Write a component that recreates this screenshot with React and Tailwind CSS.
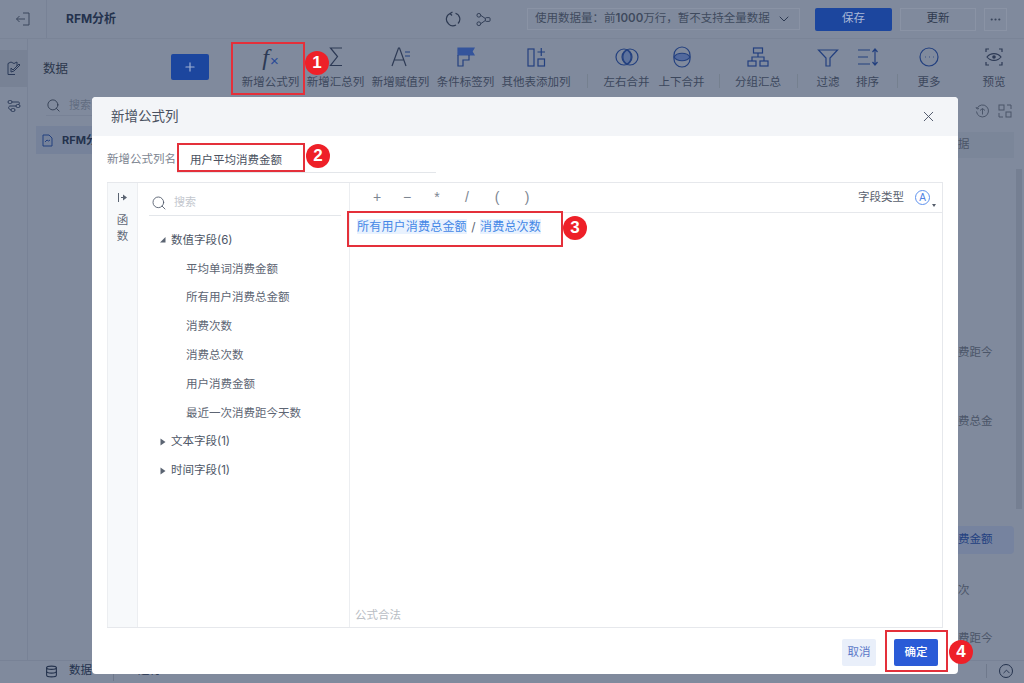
import { X, ChevronDown, Plus, Search, ChevronUp, Database, MoreHorizontal } from "lucide-react"

const ink = "#23407f"

const Icon = ({ children, size = 24 }) => (
  <svg width={size} height={size} viewBox="0 0 24 24" fill="none" stroke={ink} strokeWidth="1.2">
    {children}
  </svg>
)

const tools = [
  {
    label: "新增公式列",
    width: "w-[65px]",
    icon: (
      <div className="h-[24px] flex items-center font-['Liberation_Serif',serif] italic text-[24px] leading-none text-[#2d3a55]">
        f<span className="not-italic font-['Liberation_Sans',sans-serif] text-[15px] mt-[7px] ml-[1px] text-[#2a4b97]">×</span>
      </div>
    ),
  },
  {
    label: "新增汇总列",
    width: "w-[65px]",
    icon: <Icon><path d="M18 3H6.500l7 8.500-7 9H18" stroke="#2d3a55" /></Icon>,
  },
  {
    label: "新增赋值列",
    width: "w-[65px]",
    icon: <Icon><path d="M3 21 9.500 3h1L17 21M5.500 15h9.500" stroke="#2d3a55" /><path d="M16 7h5M16 11h5" strokeWidth="1" /></Icon>,
  },
  {
    label: "条件标签列",
    width: "w-[65px]",
    icon: (
      <Icon>
        <path d="M4 3h16l-2 3.500 2 3.500H4z" fill="#34549c" stroke="#34549c" />
        <path d="M4 10v11h5v-6h6v-5" />
      </Icon>
    ),
  },
  {
    label: "其他表添加列",
    width: "w-[76px]",
    icon: (
      <Icon>
        <rect x="4" y="4" width="6" height="17" />
        <rect x="14" y="14" width="6.500" height="7" />
        <path d="M17.250 3v8M13.500 7h7.500" />
      </Icon>
    ),
  },
  { sep: "ml-[13px] mr-[11px]" },
  {
    label: "左右合并",
    width: "w-[55px]",
    icon: (
      <Icon>
        <circle cx="9" cy="12" r="8" />
        <circle cx="15" cy="12" r="8" />
        <path d="M12 5a8 8 0 0 1 0 14 8 8 0 0 1 0-14z" fill="#34549c" fillOpacity="0.45" />
      </Icon>
    ),
  },
  {
    label: "上下合并",
    width: "w-[55px]",
    icon: (
      <Icon>
        <rect x="4" y="2" width="16" height="20" rx="8" />
        <path d="M4 12c3-5 13-5 16 0-3 5-13 5-16 0z" fill="#34549c" fillOpacity="0.6" />
      </Icon>
    ),
  },
  { sep: "ml-[10px] mr-[8px]" },
  {
    label: "分组汇总",
    width: "w-[60px]",
    icon: (
      <Icon>
        <rect x="7.500" y="3" width="9" height="5" />
        <rect x="2" y="16" width="8" height="5" />
        <rect x="14" y="16" width="8" height="5" />
        <path d="M12 8v4M6 16v-4h12v4" />
      </Icon>
    ),
  },
  { sep: "ml-[9px] mr-[10px]" },
  {
    label: "过滤",
    width: "w-[40px]",
    icon: <Icon><path d="M2.500 5h19l-7.500 8v8h-4v-8z" /></Icon>,
  },
  {
    label: "排序",
    width: "w-[39px]",
    icon: (
      <Icon>
        <path d="M2 5h12M2 12h10M2 19h12" />
        <path d="M19 4v16M16.500 7 19 4l2.500 3M16.500 17l2.500 3 2.500-3" />
      </Icon>
    ),
  },
  { sep: "ml-[10px] mr-[6px]" },
  {
    label: "更多",
    width: "w-[50px]",
    icon: (
      <Icon>
        <circle cx="12" cy="12" r="9" />
        <path d="M8 12h.5M12 12h.5M16 12h.5" strokeWidth="1.6" />
      </Icon>
    ),
  },
  {
    label: "预览",
    width: "w-[50px] ml-[15px]",
    icon: (
      <Icon>
        <path d="M4 7V4h3M17 4h3v3M4 17v3h3M17 20h3v-3" stroke="#2d3a55" />
        <path d="M5 12c3.500-4.500 10.500-4.500 14 0-3.500 4.500-10.500 4.500-14 0z" stroke="#2d3a55" />
        <circle cx="12" cy="12" r="1.800" fill="#2d3a55" stroke="none" />
      </Icon>
    ),
  },
]

const fields = ["平均单词消费金额", "所有用户消费总金额", "消费次数", "消费总次数", "用户消费金额", "最近一次消费距今天数"]

const Tool = ({ tool }) => {
  if (tool.sep) return <div className={`w-px h-[14px] mt-[35px] bg-[#75808f] ${tool.sep}`}></div>
  return (
    <div className={`${tool.width} shrink-0 flex flex-col items-center pt-[6px]`}>
      <div className="h-[24px] flex items-center justify-center">{tool.icon}</div>
      <span className="mt-[5px] text-[11.5px] leading-[16px] whitespace-nowrap text-[#3c475c]">{tool.label}</span>
    </div>
  )
}

const Marker = ({ n, box, dot }) => (
  <>
    <div className={`absolute border-2 border-[#e4303a] ${box}`}></div>
    <div className={`absolute w-[24px] h-[24px] rounded-full bg-[#ee2028] text-white flex items-center justify-center font-['Liberation_Sans',sans-serif] font-bold text-[17px] ${dot}`}>
      {n}
    </div>
  </>
)

const Caret = ({ open }) => (
  <svg width="8" height="8" viewBox="0 0 8 8" className="shrink-0" fill="#5b6472">
    {open ? <path d="M1 6.500h5.500V1z" /> : <path d="M1.500 0.500 6.500 4l-5 3.500z" />}
  </svg>
)

const Group = ({ label, open }) => (
  <div className="h-[28.8px] flex items-center gap-[4px] pl-[21px] text-[11.5px] text-[#4d5666]">
    <Caret open={open} />
    {label}
  </div>
)

export default function App() {
  return (
    <div className="relative w-[1024px] h-[683px] overflow-hidden bg-[#808a9d] font-['Inter','Noto_Sans_CJK_SC',sans-serif]">
      {/* top bar */}
      <div className="h-[39px] flex items-center border-b border-[#7a8497]">
        <div className="w-[47px] h-full flex items-center justify-center border-r border-[#788296]">
          <svg width="16" height="16" viewBox="0 0 16 16" fill="none" stroke="#3a465c" strokeWidth="1">
            <path d="M8 2h6v12H8M10 8H1.500M4.500 5 1.500 8l3 3" />
          </svg>
        </div>
        <span className="ml-[19px] text-[12px] font-bold text-[#24324d]">RFM分析</span>
        <svg className="ml-[329px]" width="16" height="16" viewBox="0 0 16 16" fill="none" stroke="#2d3a52" strokeWidth="1.2">
          <path d="M10.500 2.200A6.200 6.200 0 0 1 13 12.500M11 14a6.200 6.200 0 0 1-7.500-1.200A6.200 6.200 0 0 1 5 2.500" />
          <path d="M5 2.500 7.500 1M5 2.500 7 4.500" />
        </svg>
        <svg className="ml-[15px]" width="15" height="15" viewBox="0 0 16 16" fill="none" stroke="#2d3a52" strokeWidth="1">
          <circle cx="3" cy="3.500" r="2" />
          <circle cx="3" cy="12.500" r="2" />
          <rect x="10" y="6" width="5" height="4" rx="1" />
          <path d="M5 3.500 10 7M5 12.500 10 9" />
        </svg>
        <div className="ml-[36px] w-[273px] h-[22px] border border-[#8a93a5] flex items-center pl-[7px] text-[11.5px] text-[#3f4a5e] whitespace-nowrap">
          使用数据量：前<b className="font-semibold">1000</b>万行，暂不支持全量数据
          <ChevronDown size={16} strokeWidth={1.5} className="ml-[6px] text-[#2d3a52]" />
        </div>
        <div className="ml-[15px] w-[77px] h-[23px] rounded-[2px] bg-[#1c469e] flex items-center justify-center text-[11.5px] text-[#a9b8d6]">保存</div>
        <div className="ml-[8px] w-[76px] h-[23px] border border-[#8a93a5] flex items-center justify-center text-[11.5px] text-[#2f3a4f]">更新</div>
        <div className="ml-[8px] w-[23px] h-[23px] border border-[#8a93a5] flex items-center justify-center text-[#3a465c]">
          <MoreHorizontal size={13} />
        </div>
      </div>

      {/* body */}
      <div className="flex h-[621px]">
        <div className="w-[28px] shrink-0 border-r border-[#788296] pt-[11px]">
          <div className="h-[37px] bg-[#788295] flex items-center justify-center">
            <svg width="15" height="15" viewBox="0 0 15 15" fill="none" stroke="#2b3a58" strokeWidth="1">
              <path d="M2 2.500 5 1l3 1.500L11 1v4M2 2.500v11h7M5 7l2 2 6-6 1 1-6 6-3 1z" />
            </svg>
          </div>
          <div className="h-[37px] flex items-center justify-center">
            <svg width="14" height="14" viewBox="0 0 14 14" fill="none" stroke="#2b3a58" strokeWidth="1">
              <rect x="1" y="1.500" width="4" height="3" rx="1.500" />
              <rect x="9" y="5.500" width="4" height="3" rx="1.500" />
              <rect x="4" y="9.500" width="4" height="3" rx="1.500" />
              <path d="M5 3h6c2 0 2 2 0 2.500M9 7H3c-2 .5-2 3 1 4" />
            </svg>
          </div>
        </div>

        <div className="w-[210px] shrink-0 pl-[8px]">
          <div className="flex items-center h-[58px] pl-[7px] pt-[2px]">
            <span className="text-[12.5px] text-[#2c374c]">数据</span>
            <div className="ml-[103px] -mt-[4px] w-[38px] h-[26px] rounded-[2px] bg-[#1c469e] flex items-center justify-center">
              <Plus size={14} className="text-[#9fb0d2]" />
            </div>
          </div>
          <div className="ml-[10px] w-[60px] h-[20px] -mt-[1px] border-b border-[#788296] flex items-center gap-[8px] text-[11px] text-[#626d81] whitespace-nowrap overflow-hidden">
            <Search size={15} strokeWidth={1.4} className="shrink-0 text-[#2f3a4f]" />
            搜索
          </div>
          <div className="mt-[10px] h-[28px] bg-[#76829a] flex items-center pl-[5px] gap-[8px]">
            <svg width="13" height="13" viewBox="0 0 13 13" fill="none" stroke="#23407f" strokeWidth="1">
              <path d="M2 1h6l3 3v8H2zM4 8l2-2 1.500 1L9 6" />
            </svg>
            <span className="text-[11px] font-bold text-[#24324d] whitespace-nowrap">RFM分析</span>
          </div>
        </div>

        <div className="flex-1 min-w-0 relative">
          <div className="flex h-[58px]">
            {tools.map((tool, i) => (
              <Tool key={i} tool={tool} />
            ))}
          </div>
          {/* right panel, mostly hidden by the dialog */}
          <div className="absolute right-0 top-[58px] bottom-0 w-[66px] overflow-hidden">
            <div className="flex justify-end gap-[8px] pr-[12px] pt-[7px] text-[#3a465c]">
              <svg width="15" height="15" viewBox="0 0 15 15" fill="none" stroke="#4a5569" strokeWidth="1">
                <path d="M2 4.500A6 6 0 1 1 1.500 7.500M1 3l1 2 2-.5" />
                <path d="M7.500 10.500v-6M5 6.500l2.500-2 2.500 2" />
              </svg>
              <svg width="14" height="14" viewBox="0 0 14 14" fill="none" stroke="#4a5569" strokeWidth="1">
                <rect x="1" y="1" width="5" height="5" />
                <rect x="8" y="8" width="5" height="5" />
                <path d="M9 1h4v4M5 13H1V9" />
              </svg>
            </div>
            <div className="mt-[13px] h-[26px] mr-[10px] bg-[#7b8699] flex items-center text-[11.5px] text-[#4b5568]">据</div>
            <div className="mt-[182px] h-[26px] mr-[10px] flex items-center text-[11.5px] text-[#4b5568]">费距今</div>
            <div className="mt-[43px] h-[26px] mr-[10px] flex items-center text-[11.5px] text-[#4b5568]">费总金</div>
            <div className="mt-[91px] h-[28px] mr-[10px] rounded-r-[4px] bg-[#76839f] flex items-center text-[11.5px] text-[#23407f]">费金额</div>
            <div className="mt-[24px] h-[26px] mr-[10px] flex items-center text-[11.5px] text-[#4b5568]">次</div>
            <div className="mt-[22px] h-[26px] mr-[10px] flex items-center text-[11.5px] text-[#4b5568]">费距今</div>
          </div>
          <div className="absolute right-[2px] top-[130px] w-[6px] h-[340px] bg-[#757f92]"></div>
        </div>
      </div>

      {/* bottom bar */}
      <div className="h-[23px] flex items-center border-t border-[#788296] pb-[2px]">
        <Database size={13} className="ml-[45px] text-[#24324d]" />
        <span className="ml-[11px] text-[11.5px] text-[#24324d] w-[44px]">数据</span>
        <div className="w-px h-full bg-[#6f798c]"></div>
        <span className="ml-[24px] text-[11.5px] text-[#24324d]">运行</span>
        <div className="ml-auto w-px h-[14px] bg-[#6f798c]"></div>
        <div className="ml-[12px] mr-[11px] w-[14px] h-[14px] rounded-full border border-[#24324d] flex items-center justify-center">
          <ChevronUp size={11} className="text-[#24324d]" />
        </div>
      </div>

      {/* dialog */}
      <div className="absolute left-[92px] top-[97px] w-[866px] h-[577px] bg-white rounded-[4px] flex flex-col overflow-hidden">
        <div className="h-[39px] shrink-0 bg-[#f3f5f8] flex items-center justify-between pl-[19px] pr-[21px]">
          <span className="text-[13.5px] text-[#4a5160]">新增公式列</span>
          <X size={17} strokeWidth={1.3} className="text-[#475063]" />
        </div>

        <div className="h-[46px] shrink-0 flex items-center pl-[15px] pt-[1px]">
          <span className="w-[70px] text-[11.5px] text-[#7d8591] whitespace-nowrap">新增公式列名</span>
          <div className="w-[259px] h-[24px] mt-[2px] pl-[13px] border-b border-[#e3e6ea] text-[11.5px] leading-[22px] text-[#4a5160]">用户平均消费金额</div>
        </div>

        <div className="mx-[15px] h-[446px] shrink-0 flex border-y border-[#e6e8ec]">
          <div className="w-[31px] shrink-0 bg-[#f7f9fb] border-x border-[#eceef1] flex flex-col items-center pt-[8px] text-[11.5px] leading-[16px] text-[#626a78]">
            <svg width="11" height="11" viewBox="0 0 11 11" fill="#5b6472" className="mb-[9px] mt-[1px]">
              <path d="M1 1h1v9H1zM4 5h2V2.500L10 5.500 6 8.500V6H4z" />
            </svg>
            <span>函</span>
            <span>数</span>
          </div>

          <div className="w-[212px] shrink-0 border-r border-[#eceef1] flex flex-col">
            <div className="ml-[11px] mr-[8px] h-[33px] border-b border-[#e3e6ea] flex items-center gap-[7px] pl-[2px] pt-[7px] text-[11px] text-[#c3c7ce]">
              <Search size={16} strokeWidth={1.3} className="text-[#50596a]" />
              搜索
            </div>
            <div className="mt-[10px]">
              <Group label="数值字段(6)" open />
              {fields.map((f) => (
                <div key={f} className="h-[28.8px] pl-[48px] flex items-center text-[11.5px] text-[#5d6573]">{f}</div>
              ))}
              <Group label="文本字段(1)" />
              <Group label="时间字段(1)" />
            </div>
          </div>

          <div className="flex-1 min-w-0 border-r border-[#e6e8ec] flex flex-col">
            <div className="h-[30px] shrink-0 border-b border-[#e6e8ec] flex items-center pl-[12px] pr-[5px] text-[14px] text-[#7d8591]">
              {["+", "−", "*", "/", "(", ")"].map((op) => (
                <span key={op} className="w-[30px] text-center font-['Liberation_Sans',sans-serif]">{op}</span>
              ))}
              <span className="ml-auto mt-[1px] text-[11.5px] text-[#59616e]">字段类型</span>
              <div className="relative ml-[11px] mr-[7px] w-[15px] h-[15px] rounded-full border border-[#5f93ee] text-[#4f83e4] text-[10px] leading-[13px] text-center font-['Liberation_Sans',sans-serif]">
                A
                <div className="absolute -right-[7px] top-[13px] border-x-[2px] border-t-[3px] border-x-transparent border-t-[#555d6b]"></div>
              </div>
            </div>
            <div className="flex items-center pl-[7px] pt-[6px] text-[12px] leading-[15px] whitespace-nowrap">
              <span className="w-[110px] bg-[#e9f2fe] text-[#4487e6] tracking-[0.2px]">所有用户消费总金额</span>
              <span className="w-[13px] text-center text-[#5d6573]">/</span>
              <span className="w-[61px] bg-[#e9f2fe] text-[#4487e6] tracking-[0.2px]">消费总次数</span>
            </div>
            <div className="mt-auto pl-[5px] pb-[3px] text-[11.5px] text-[#b9bdc4]">公式合法</div>
          </div>
        </div>

        <div className="flex-1 flex justify-end items-start pt-[11px] pr-[20px]">
          <div className="w-[34px] h-[27px] rounded-[2px] bg-[#e9effa] flex items-center justify-center text-[11.5px] text-[#5b78c8]">取消</div>
          <div className="ml-[18px] w-[44px] h-[27px] rounded-[2px] bg-[#2a5bd7] flex items-center justify-center text-[11.5px] font-medium text-white">确定</div>
        </div>
      </div>

      {/* callouts over the screenshot */}
      <Marker n="1" box="left-[231px] top-[42px] w-[74px] h-[53px]" dot="left-[305px] top-[51px]" />
      <Marker n="2" box="left-[177px] top-[143px] w-[128px] h-[29px]" dot="left-[306px] top-[144px]" />
      <Marker n="3" box="left-[347px] top-[211px] w-[216px] h-[36px]" dot="left-[563px] top-[216px]" />
      <Marker n="4" box="left-[885px] top-[630px] w-[63px] h-[42px]" dot="left-[949px] top-[640px]" />
    </div>
  )
}
